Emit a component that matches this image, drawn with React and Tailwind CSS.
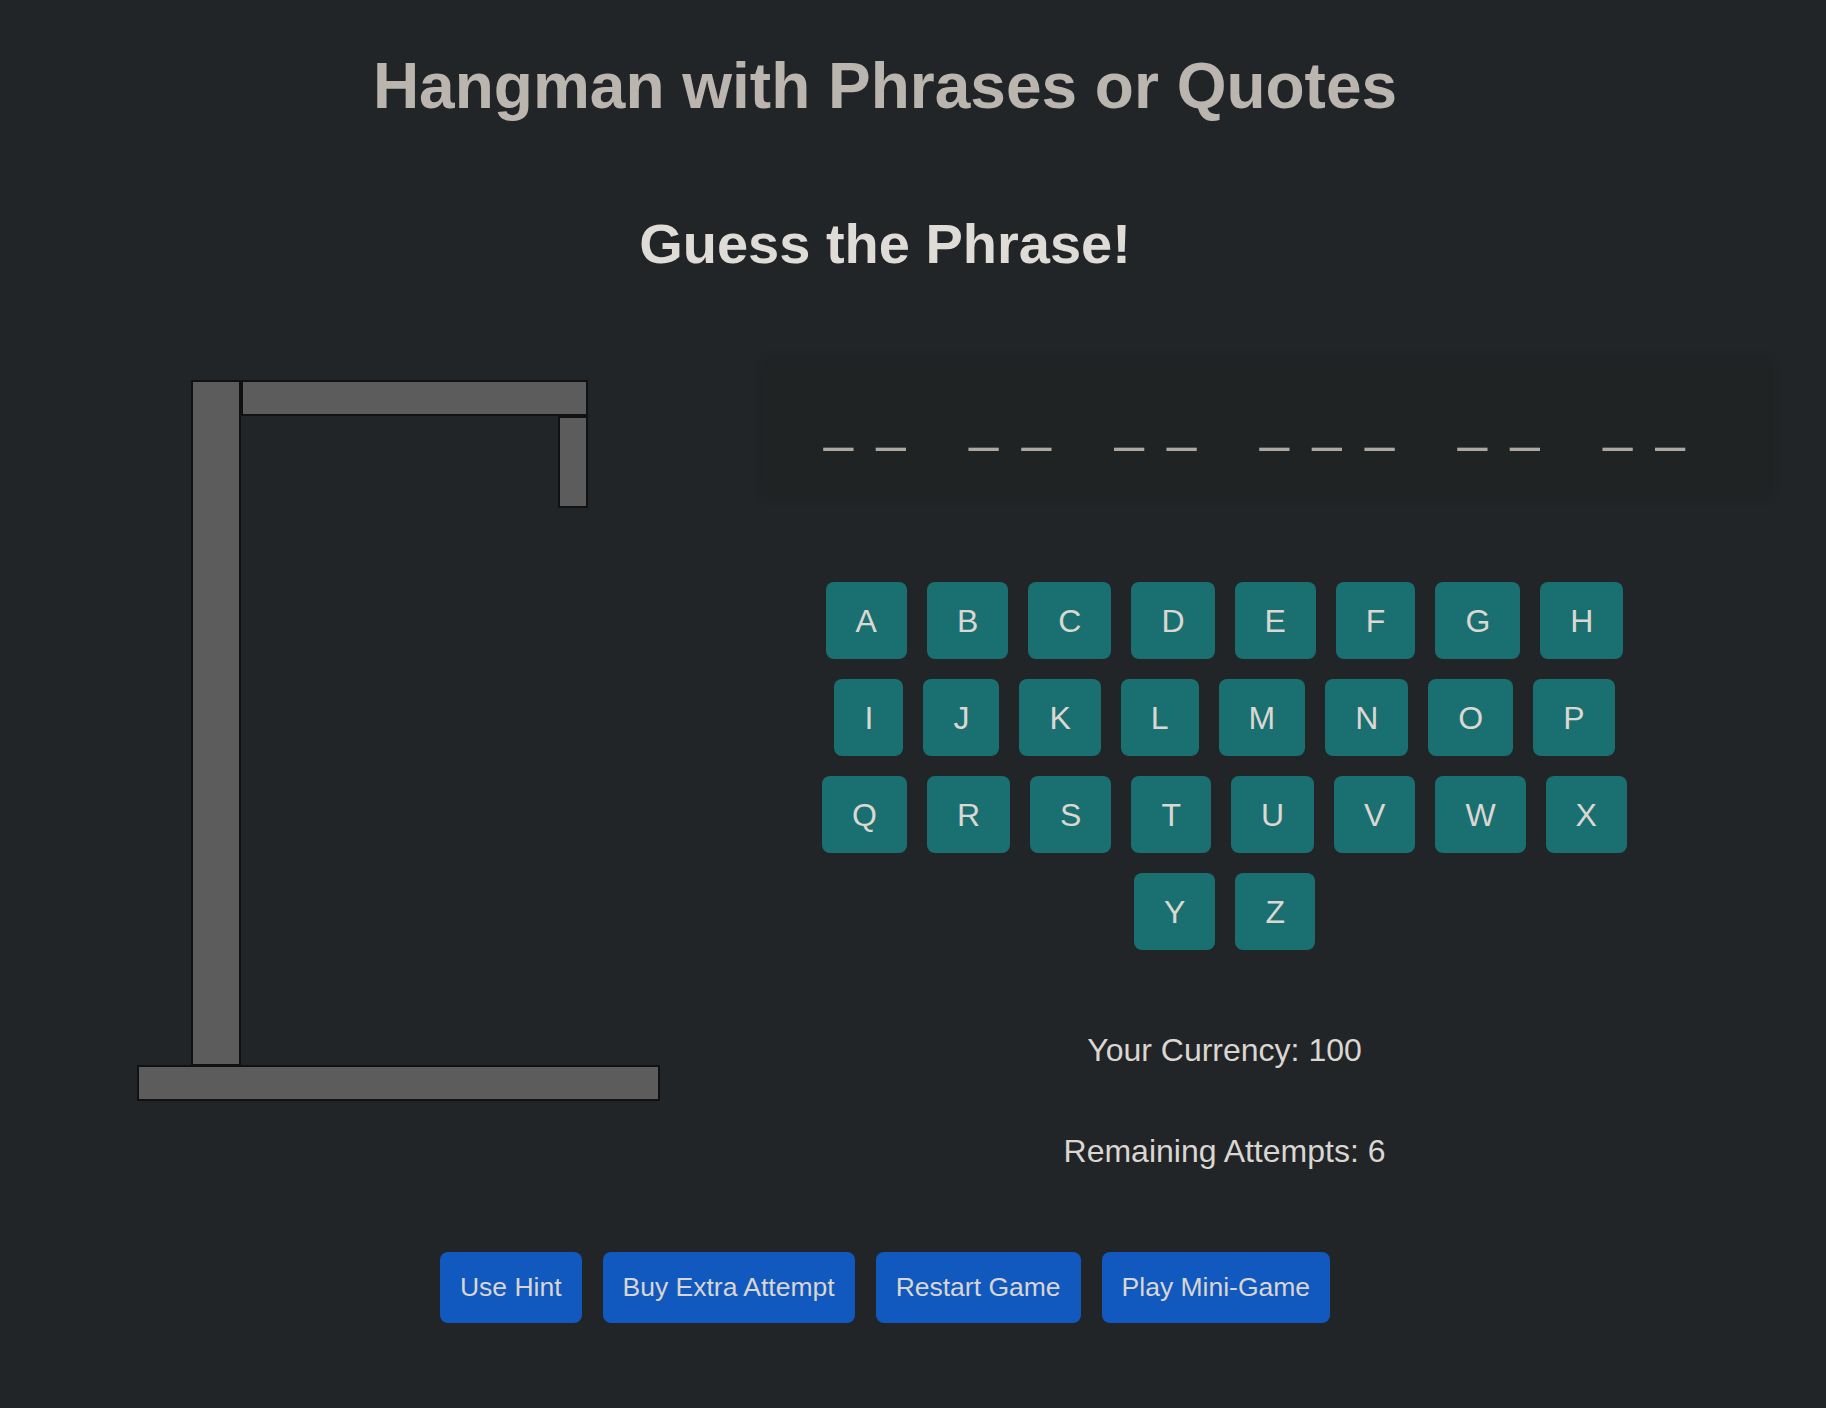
import { useState } from "react";

const phrase = "xx xx xx xxx xx xx";
const letters = "ABCDEFGHIJKLMNOPQRSTUVWXYZ".split("");
const actions = ["Use Hint", "Buy Extra Attempt", "Restart Game", "Play Mini-Game"];

function Gallows() {
  // base, post, beam and rope, drawn in page pixels offset from the column
  return (
    <svg width="526" height="725" viewBox="0 0 526 725" className="mt-[18px] block">
      <g fill="#5c5c5c" stroke="#111" strokeWidth="2">
        <rect x="56" y="3" width="48" height="684" />
        <rect x="106" y="3" width="345" height="34" />
        <rect x="423" y="39" width="28" height="90" />
        <rect x="2" y="688" width="521" height="34" />
      </g>
    </svg>
  );
}

function App() {
  const [guessed, setGuessed] = useState([]);
  const words = phrase.split(" ");

  return (
    <div className="min-h-screen bg-[#222527] font-['Liberation_Sans',Arial,sans-serif]">
      <div className="w-[1770px] text-center pb-[86px]">
        <h1 className="pt-[54px] text-[64px] leading-none font-bold text-[#bab5af]">Hangman with Phrases or Quotes</h1>
        <h2 className="mt-[98px] text-[56px] leading-none font-bold text-[#dfdbd7]">Guess the Phrase!</h2>

        <div className="mt-[88px] flex items-start">
          <div className="ml-[136px] w-[526px]">
            <Gallows />
          </div>

          <div className="ml-[17px] w-[1100px] flex flex-col items-center">
            <div className="self-start ml-[84px] w-[1007px] h-[137px] pt-[37px] pl-[61px] flex gap-[63.8px] rounded-[10px] bg-[#202324] shadow-[0_0_12px_rgba(0,0,0,0.18)]">
              {words.map((w, i) => (
                <div key={i} className="flex gap-[23.7px]">
                  {w.split("").map((c, j) => (
                    <span key={j} className="text-[52px] leading-none text-[#aca7a1]">_</span>
                  ))}
                </div>
              ))}
            </div>

            <div className="mt-[75px] w-[860px] flex flex-wrap justify-center">
              {letters.map((l) => (
                <button
                  key={l}
                  onClick={() => setGuessed([...guessed, l])}
                  className="m-[10px] h-[77px] px-[30px] flex items-center justify-center rounded-[8px] bg-[#1a7070] text-[32px] leading-none text-[#dbd7d2]"
                >
                  {l}
                </button>
              ))}
            </div>

            <p className="mt-[74px] text-[32px] leading-none text-[#dad6d1]">Your Currency: 100</p>
            <p className="mt-[69px] text-[32px] leading-none text-[#dad6d1]">Remaining Attempts: 6</p>
          </div>
        </div>

        <div className="mt-[85px] flex justify-center gap-[21px]">
          {actions.map((a) => (
            <button key={a} className="h-[71px] px-[20px] rounded-[8px] bg-[#1159bf] text-[26.5px] leading-none text-[#d9d5d0]">
              {a}
            </button>
          ))}
        </div>
      </div>
    </div>
  );
}

export default App;
